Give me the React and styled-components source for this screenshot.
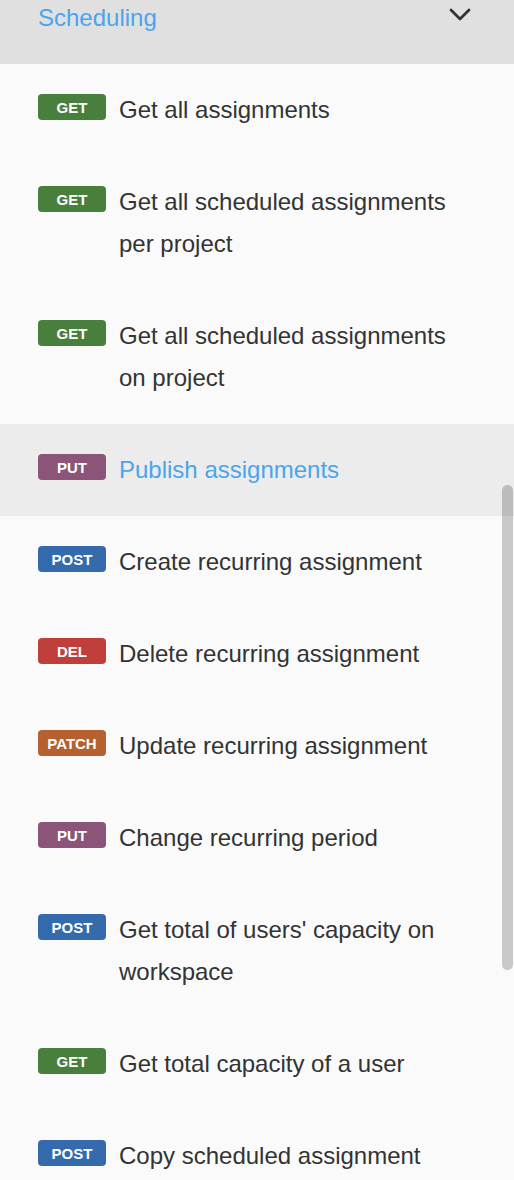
import React from 'react';
import styled, {createGlobalStyle} from 'styled-components';

const GlobalStyle = createGlobalStyle`
  html, body {
    margin: 0;
    padding: 0;
    height: 1180px;
    overflow: hidden;
    background: #fafafa;
  }
  body {
    font-family: "Liberation Sans", Arial, Helvetica, sans-serif;
  }
`

const methodColors = {
    GET: '#497f3c',
    POST: '#356bac',
    PUT: '#8c5479',
    DEL: '#c03f3a',
    PATCH: '#b5602f',
}

const endpoints = [
    {method: 'GET', title: 'Get all assignments'},
    {method: 'GET', title: 'Get all scheduled assignments per project'},
    {method: 'GET', title: 'Get all scheduled assignments on project'},
    {method: 'PUT', title: 'Publish assignments', active: true},
    {method: 'POST', title: 'Create recurring assignment'},
    {method: 'DEL', title: 'Delete recurring assignment'},
    {method: 'PATCH', title: 'Update recurring assignment'},
    {method: 'PUT', title: 'Change recurring period'},
    {method: 'POST', title: "Get total of users' capacity on workspace"},
    {method: 'GET', title: 'Get total capacity of a user'},
    {method: 'POST', title: 'Copy scheduled assignment'},
]

const ChevronIcon = () => (
    <svg width="22" height="14" viewBox="0 0 22 14">
        <polyline points="2,2 11,11 20,2" fill="none" stroke="#333" strokeWidth="2.8"
                  strokeLinecap="round" strokeLinejoin="round"/>
    </svg>
)

const App = () => {
    return (
        <StyledSidebar>
            <GlobalStyle/>
            <StyledHeader>
                <StyledHeaderTitle>Scheduling</StyledHeaderTitle>
                <StyledChevron><ChevronIcon/></StyledChevron>
            </StyledHeader>
            <StyledList>
                {endpoints.map((item, i) => (
                    <StyledItem key={i} active={item.active ? 1 : 0}>
                        <StyledBadge color={methodColors[item.method]}>{item.method}</StyledBadge>
                        <StyledTitle active={item.active ? 1 : 0}>{item.title}</StyledTitle>
                    </StyledItem>
                ))}
            </StyledList>
            <StyledScrollThumb/>
        </StyledSidebar>
    )
}

export default App;

const StyledSidebar = styled.div`
  position: relative;
  width: 514px;
  height: 1180px;
  overflow: hidden;
  background: #fafafa;
`

const StyledHeader = styled.div`
  display: flex;
  align-items: flex-end;
  justify-content: space-between;
  height: 64px;
  box-sizing: border-box;
  padding: 0 43px 25px 38px;
  background: #e0e0e0;
`

const StyledHeaderTitle = styled.span`
  font-size: 24px;
  line-height: 42px;
  color: #4ba4ec;
`

const StyledChevron = styled.span`
  display: flex;
  align-self: flex-start;
  margin-top: 8px;
`

const StyledList = styled.ul`
  list-style: none;
  margin: 0;
  padding: 0;
`

const StyledItem = styled.li`
  display: flex;
  align-items: flex-start;
  gap: 13px;
  padding: 25px 40px 25px 38px;
  background: ${({active}) => active ? '#ececec' : 'transparent'};
`

const StyledBadge = styled.span`
  flex-shrink: 0;
  display: flex;
  align-items: center;
  justify-content: center;
  width: 68px;
  height: 26px;
  margin-top: 5px;
  border-radius: 4px;
  background: ${({color}) => color};
  color: #fff;
  font-size: 15px;
  font-weight: 700;
`

const StyledTitle = styled.span`
  font-size: 24px;
  line-height: 42px;
  color: ${({active}) => active ? '#4ba4ec' : '#333'};
`

const StyledScrollThumb = styled.div`
  position: absolute;
  top: 485px;
  right: 1px;
  width: 11px;
  height: 485px;
  border-radius: 6px;
  background: rgba(0, 0, 0, 0.2);
`
